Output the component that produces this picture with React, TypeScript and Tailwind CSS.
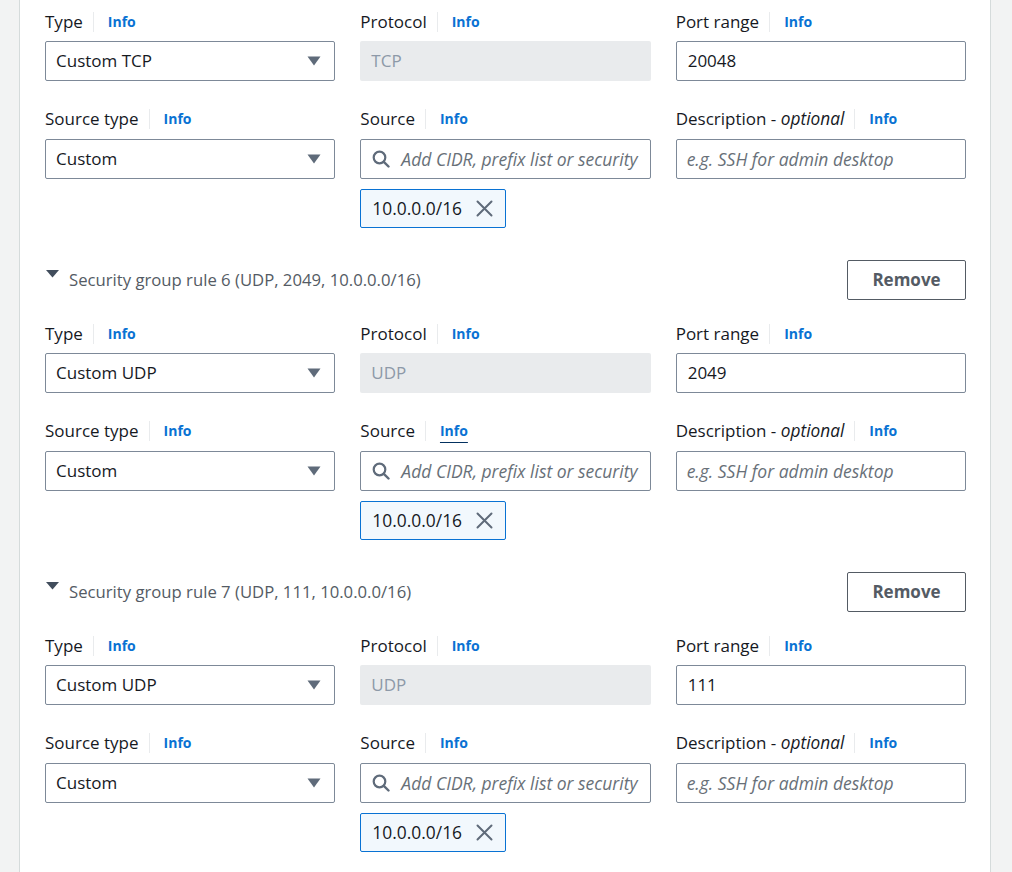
import React from 'react';

const font = { fontFamily: '"Open Sans", "Noto Sans", Arial, sans-serif' };

const Caret = () => (
  <svg width="14" height="10" viewBox="0 0 14 10" className="shrink-0">
    <path d="M0.5 0.5 H13.5 L7 9.5 Z" fill="#5f6b7a" />
  </svg>
);

const SearchIcon = () => (
  <svg width="18" height="18" viewBox="0 0 18 18" className="shrink-0">
    <circle cx="7.5" cy="7.5" r="5.8" fill="none" stroke="#5f6b7a" strokeWidth="2.2" />
    <path d="M11.8 11.8 L16.5 16.5" stroke="#5f6b7a" strokeWidth="2.4" strokeLinecap="round" />
  </svg>
);

const XIcon = () => (
  <svg width="17" height="17" viewBox="0 0 17 17" className="shrink-0">
    <path d="M1.5 1.5 L15.5 15.5 M15.5 1.5 L1.5 15.5" stroke="#5f6b7a" strokeWidth="2" strokeLinecap="round" />
  </svg>
);

const Label = ({ children, underline }: { children: React.ReactNode; underline?: boolean }) => (
  <div className="flex h-6 items-center">
    <span className="pr-[10px] text-[17px] text-[#16191f]">{children}</span>
    <span className="h-5 w-px bg-[#e9ebed]"></span>
    <span
      className={
        underline
          ? 'ml-[14px] text-sm font-bold text-[#0972d3] underline decoration-[#033160] decoration-1 underline-offset-[6px]'
          : 'ml-[14px] text-sm font-bold text-[#0972d3]'
      }
    >
      Info
    </span>
  </div>
);

const Select = ({ value }: { value: string }) => (
  <div className="flex h-10 items-center justify-between rounded-[2px] border border-[#7d8998] bg-white pl-[10px] pr-[13px] text-[17px] text-[#16191f]">
    <span>{value}</span>
    <Caret />
  </div>
);

const Disabled = ({ value }: { value: string }) => (
  <div className="flex h-10 items-center rounded-[2px] bg-[#e9ebed] pl-[11px] text-[17px] text-[#8d99a8]">{value}</div>
);

const TextInput = ({ value }: { value: string }) => (
  <div className="flex h-10 items-center rounded-[2px] border border-[#7d8998] bg-white pl-[11px] text-[17px] text-[#16191f]">
    {value}
  </div>
);

const Placeholder = ({ text }: { text: string }) => (
  <div className="flex h-10 items-center overflow-hidden whitespace-nowrap rounded-[2px] border border-[#7d8998] bg-white pl-[10px] text-[17.5px] italic text-[#687078]">
    {text}
  </div>
);

const SourceInput = () => (
  <div className="flex h-10 items-center gap-[11px] overflow-hidden whitespace-nowrap rounded-[2px] border border-[#7d8998] bg-white pl-[11px] text-[17.5px] italic text-[#687078]">
    <SearchIcon />
    <span>Add CIDR, prefix list or security</span>
  </div>
);

const Token = () => (
  <div className="mt-[10px] flex h-[39px] w-[146px] items-center gap-[14px] rounded-[2px] border border-[#0972d3] bg-[#f2f8fd] pl-[11px] text-[17.4px] text-[#16191f]">
    <span>10.0.0.0/16</span>
    <XIcon />
  </div>
);

type Rule = { type: string; protocol: string; port: string };

const RuleFields = ({ rule, underlineSource }: { rule: Rule; underlineSource?: boolean }) => (
  <>
    <div className="grid grid-cols-3 gap-x-[25px]">
      <div>
        <Label>Type</Label>
        <div className="mt-[7px]"><Select value={rule.type} /></div>
      </div>
      <div>
        <Label>Protocol</Label>
        <div className="mt-[7px]"><Disabled value={rule.protocol} /></div>
      </div>
      <div>
        <Label>Port range</Label>
        <div className="mt-[7px]"><TextInput value={rule.port} /></div>
      </div>
    </div>
    <div className="mt-[26px] grid grid-cols-3 gap-x-[25px]">
      <div>
        <Label>Source type</Label>
        <div className="mt-[8px]"><Select value="Custom" /></div>
      </div>
      <div>
        <Label underline={underlineSource}>Source</Label>
        <div className="mt-[8px]"><SourceInput /></div>
        <Token />
      </div>
      <div>
        <Label>
          Description - <i className="text-[17.3px]">optional</i>
        </Label>
        <div className="mt-[8px]"><Placeholder text="e.g. SSH for admin desktop" /></div>
      </div>
    </div>
  </>
);

const RuleHeader = ({ title }: { title: string }) => (
  <div className="mt-[32px] flex h-10 items-center justify-between">
    <div className="flex items-center">
      <svg width="14" height="8" viewBox="0 0 14 8" className="mb-[12px] ml-px mr-[9px]">
        <path d="M0 0 H13 L6.5 7.5 Z" fill="#414d5c" />
      </svg>
      <span className="text-[16.7px] text-[#545b64]">{title}</span>
    </div>
    <button className="h-10 w-[119px] rounded-[2px] border border-[#545b64] bg-white text-[17px] font-bold text-[#545b64]">
      Remove
    </button>
  </div>
);

export default function App() {
  return (
    <div className="min-h-screen bg-[#f2f3f3] pl-[19px]" style={font}>
      <div className="min-h-[872px] w-[972px] border-x border-[#d5dbdb] bg-white pl-[25px] pr-[24px] pt-[10px]">
        <RuleFields rule={{ type: 'Custom TCP', protocol: 'TCP', port: '20048' }} />
        <RuleHeader title="Security group rule 6 (UDP, 2049, 10.0.0.0/16)" />
        <div className="mt-[22px]">
          <RuleFields rule={{ type: 'Custom UDP', protocol: 'UDP', port: '2049' }} underlineSource />
        </div>
        <RuleHeader title="Security group rule 7 (UDP, 111, 10.0.0.0/16)" />
        <div className="mt-[22px]">
          <RuleFields rule={{ type: 'Custom UDP', protocol: 'UDP', port: '111' }} />
        </div>
      </div>
    </div>
  );
}
